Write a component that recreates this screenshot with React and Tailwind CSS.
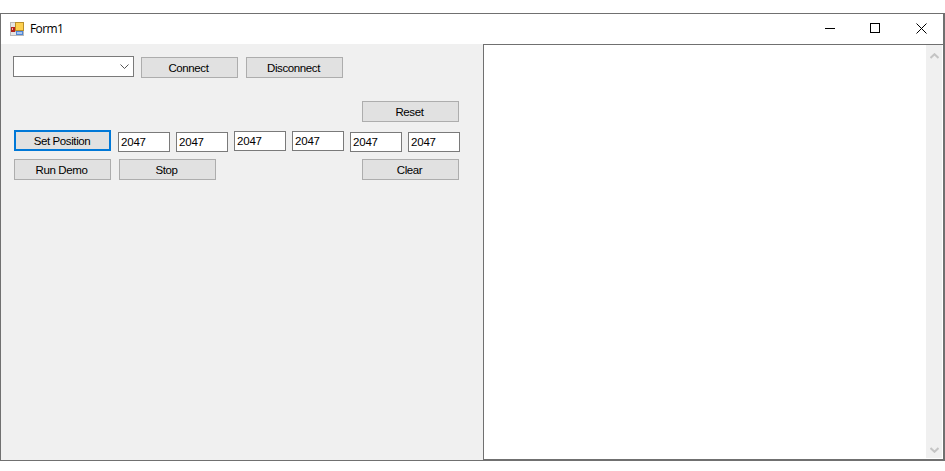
const FONT = "font-['Liberation_Sans',Arial,sans-serif]";

function Btn({ children, className = "" }) {
  return (
    <button className={`w-[97px] h-[21px] flex items-center justify-center bg-[#e1e1e1] border border-[#adadad] pt-[2px] pr-[2px] text-[11.5px] tracking-[-0.4px] leading-none text-black ${className}`}>
      {children}
    </button>
  );
}

function Field({ className = "" }) {
  return (
    <div className={`w-[52px] h-[20px] bg-white border border-[#7a7a7a] pl-[2px] pt-[1px] flex items-center text-[11.5px] tracking-[-0.2px] leading-none text-black ${className}`}>
      2047
    </div>
  );
}

function AppIcon() {
  return (
    <svg width="14" height="14" viewBox="0 0 14 14" className="block">
      <rect x="0" y="0" width="14" height="14" fill="#b9b9b9" />
      <rect x="1" y="1" width="5" height="4" fill="#e4e4e4" />
      <rect x="1" y="10" width="5" height="3" fill="#e4e4e4" />
      <rect x="5" y="0" width="9" height="9" fill="#b98f2a" />
      <rect x="6" y="1" width="7" height="7" fill="#fdd050" />
      <rect x="1" y="5" width="4" height="5" fill="#b3231c" />
      <rect x="2" y="6" width="1" height="2" fill="#f0b0a8" />
      <rect x="6" y="9" width="7" height="4" fill="#4f86d6" />
      <rect x="7" y="10" width="5" height="2" fill="#a9c6ee" />
    </svg>
  );
}

export default function App() {
  return (
    <div className={`w-[945px] h-[471px] bg-white pt-[13px] ${FONT}`}>
      <div className="h-[448px] flex flex-col border border-[#707070] border-r-2">
        <div className="h-[30px] shrink-0 bg-white flex items-center pl-[9px]">
          <AppIcon />
          <span className="ml-[6px] text-[12px] tracking-[-0.6px] text-black font-['Open_Sans',sans-serif]">Form1</span>
          <div className="ml-auto flex items-center h-full pb-[2px]">
            <div className="w-[42px] h-full flex items-center justify-center">
              <svg width="10" height="10" viewBox="0 0 10 10"><path d="M0 5.5H10" stroke="#000" strokeWidth="1" /></svg>
            </div>
            <div className="w-[48px] h-full flex items-center justify-center">
              <svg width="10" height="10" viewBox="0 0 10 10"><rect x="0.5" y="0.5" width="9" height="9" fill="none" stroke="#000" strokeWidth="1" /></svg>
            </div>
            <div className="w-[44px] h-full flex items-center justify-center">
              <svg width="11" height="11" viewBox="0 0 11 11"><path d="M0.5 0.5L10.5 10.5M10.5 0.5L0.5 10.5" stroke="#000" strokeWidth="1" /></svg>
            </div>
          </div>
        </div>
        <div className="flex-1 flex min-h-0">
          <div className="w-[482px] shrink-0 bg-[#f0f0f0] flex flex-col pl-[12px] pt-[12px]">
            <div className="flex items-start">
              <div className="w-[121px] h-[21px] bg-white border border-[#7a7a7a] flex items-center justify-end pr-[4px]">
                <svg width="9" height="5" viewBox="0 0 9 5"><path d="M0.5 0.5L4.5 4.5L8.5 0.5" fill="none" stroke="#555" strokeWidth="1" /></svg>
              </div>
              <Btn className="ml-[7px] mt-[1px]">Connect</Btn>
              <Btn className="ml-[8px] mt-[1px]">Disconnect</Btn>
            </div>
            <div className="flex justify-end mt-[23px] pr-[24px]">
              <Btn>Reset</Btn>
            </div>
            <div className="flex items-start mt-[8px] ml-[1px]">
              <button className="w-[97px] h-[21px] flex items-center justify-center bg-[#e1e1e1] border-2 border-[#0078d7] pt-[2px] pr-[1px] text-[11.5px] tracking-[-0.4px] leading-none text-black">
                Set Position
              </button>
              <Field className="ml-[7px] mt-[2px]" />
              <Field className="ml-[6px] mt-[2px]" />
              <Field className="ml-[6px] mt-[1px]" />
              <Field className="ml-[6px] mt-[1px]" />
              <Field className="ml-[6px] mt-[2px]" />
              <Field className="ml-[6px] mt-[2px]" />
            </div>
            <div className="flex items-start mt-[7px] ml-[1px]">
              <Btn>Run Demo</Btn>
              <Btn className="ml-[8px]">Stop</Btn>
              <Btn className="ml-[146px]">Clear</Btn>
            </div>
          </div>
          <div className="flex-1 border border-[#707070] border-r-0 bg-white flex justify-end pr-[1px] pb-[1px]">
            <div className="w-[16px] h-full bg-[#f0f0f0] flex flex-col items-center justify-between pt-[8px] pb-[5px]">
              <svg width="9" height="6" viewBox="0 0 9 6"><path d="M0.5 5L4.5 1.2L8.5 5" fill="none" stroke="#c4c4c4" strokeWidth="2" /></svg>
              <svg width="9" height="6" viewBox="0 0 9 6"><path d="M0.5 1L4.5 4.8L8.5 1" fill="none" stroke="#c4c4c4" strokeWidth="2" /></svg>
            </div>
          </div>
        </div>
      </div>
    </div>
  );
}
